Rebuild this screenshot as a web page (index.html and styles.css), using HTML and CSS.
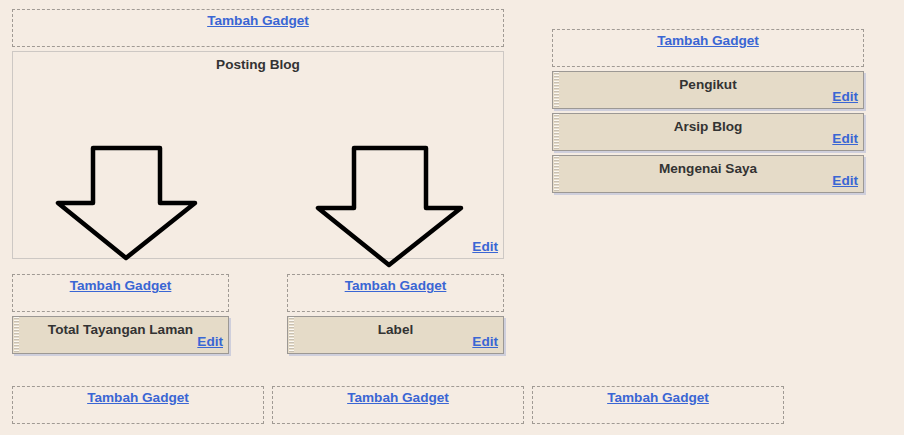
FILE: index.html
```html
<!DOCTYPE html>
<html lang='id'>
<head>
    <meta charset='UTF-8'>
    <title>Tata Letak</title>
    <link rel="stylesheet" href="styles.css">
</head>
<body>
    <div class='layout'>
        <div class='columns'>
            <div class='main'>
                <div class='add-gadget'><a href='#'>Tambah Gadget</a></div>
                <div class='posts'>
                    <h2>Posting Blog</h2>
                    <a href='#' class='edit'>Edit</a>
                </div>
                <div class='main-bottom'>
                    <div class='section'>
                        <div class='add-gadget'><a href='#'>Tambah Gadget</a></div>
                        <div class='widget'>
                            <h3>Total Tayangan Laman</h3>
                            <a href='#' class='edit'>Edit</a>
                        </div>
                    </div>
                    <div class='section'>
                        <div class='add-gadget'><a href='#'>Tambah Gadget</a></div>
                        <div class='widget'>
                            <h3>Label</h3>
                            <a href='#' class='edit'>Edit</a>
                        </div>
                    </div>
                </div>
            </div>
            <div class='sidebar'>
                <div class='add-gadget'><a href='#'>Tambah Gadget</a></div>
                <div class='widget'>
                    <h3>Pengikut</h3>
                    <a href='#' class='edit'>Edit</a>
                </div>
                <div class='widget'>
                    <h3>Arsip Blog</h3>
                    <a href='#' class='edit'>Edit</a>
                </div>
                <div class='widget'>
                    <h3>Mengenai Saya</h3>
                    <a href='#' class='edit'>Edit</a>
                </div>
            </div>
        </div>
        <div class='footer'>
            <div class='add-gadget'><a href='#'>Tambah Gadget</a></div>
            <div class='add-gadget'><a href='#'>Tambah Gadget</a></div>
            <div class='add-gadget'><a href='#'>Tambah Gadget</a></div>
        </div>
    </div>
    <!-- drawn pointers over the layout -->
    <svg class='arrows' width='904' height='435' viewBox='0 0 904 435'>
        <polygon points='93,148 160,148 160,203 195,203 126,258 58,203 93,203' />
        <polygon points='354,148 426,148 426,208 461,208 389,265 318,208 354,208' />
    </svg>
</body>
</html>
```

FILE: styles.css
```css
body { margin: 0; background-color: #f5ece3; font-family: "Liberation Sans", Arial, sans-serif; font-size: 13.6px; font-weight: bold; line-height: 16px; color: #333; }
a { color: #3a66d4; }
h2, h3 { margin: 0; font-size: 13.6px; text-align: center; }
.layout { width: 852px; padding: 9px 0 0 12px; }
.columns { display: flex; gap: 48px; }
.main { width: 492px; display: flex; flex-direction: column; gap: 4px; }
.sidebar { width: 312px; margin-top: 20px; display: flex; flex-direction: column; gap: 4px; }
.add-gadget { box-sizing: border-box; height: 38px; border: 1px dashed #a09a94; padding-top: 3px; text-align: center; }
.posts { box-sizing: border-box; height: 208px; border: 1px solid #cdc8c4; padding: 5px 5px 0; display: flex; flex-direction: column; }
.posts .edit { margin-top: auto; margin-bottom: 3px; align-self: flex-end; }
.main-bottom { display: flex; gap: 58px; margin-top: 11px; }
.section { width: 217px; display: flex; flex-direction: column; gap: 4px; }
.widget { box-sizing: border-box; height: 38px; border: 1px solid #9c9894; padding: 5px 5px 0; box-shadow: 2px 2px 0 #cfcfdc; background-color: #e5dbc8; background-image: repeating-linear-gradient(to bottom, #fbf8f2 0 1px, #c8c0b3 1px 2px, #e5dbc8 2px 3px); background-size: 5px 100%; background-repeat: no-repeat; background-position: 1px 0; display: flex; flex-direction: column; }
.widget .edit { align-self: flex-end; margin-top: -4px; }
.footer { display: flex; gap: 8px; margin-top: 32px; }
.footer .add-gadget { width: 252px; }
.arrows { position: absolute; left: 0; top: 0; pointer-events: none; }
.arrows polygon { fill: none; stroke: #000; stroke-width: 4.5; stroke-linejoin: round; }
```
